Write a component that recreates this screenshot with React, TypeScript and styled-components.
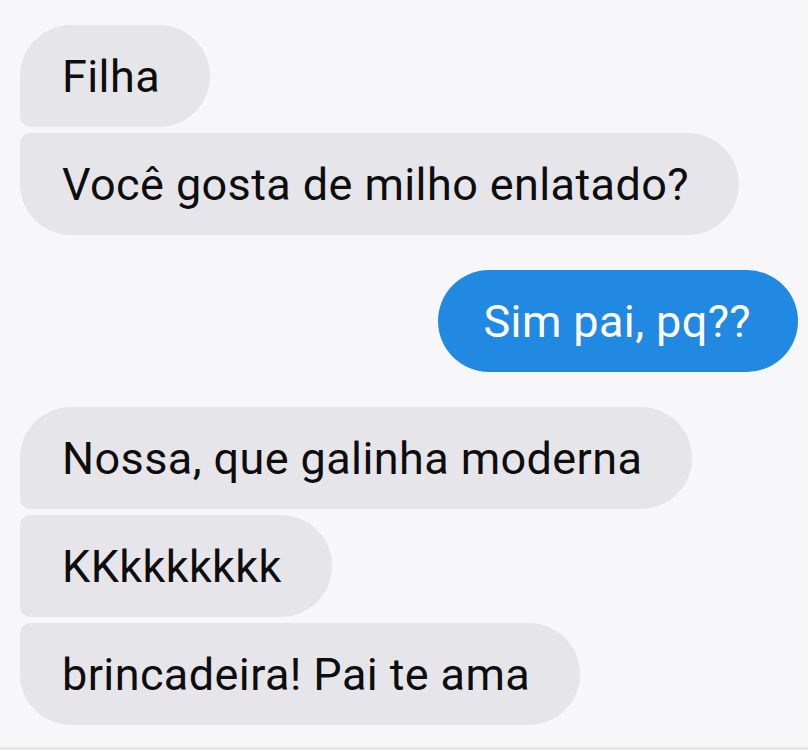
import * as React from "react";
import styled, { createGlobalStyle } from "styled-components";

const GlobalStyle = createGlobalStyle`
  html, body {
    margin: 0;
    padding: 0;
    background: #f7f6f9;
  }
  body {
    font-family: Roboto, "Noto Sans", "Liberation Sans", sans-serif;
  }
`;

const Screen = styled.div`
  width: 808px;
  height: 750px;
  box-sizing: border-box;
  padding: 25px 10px 0 20px;
  display: flex;
  flex-direction: column;
  gap: 35px;
  border-bottom: 3px solid #e9e8ec;
  background: #f7f6f9;
`;

const Group = styled.div<{ $mine?: boolean }>`
  display: flex;
  flex-direction: column;
  align-items: ${(p) => (p.$mine ? "flex-end" : "flex-start")};
  gap: 6px;
`;

type Pos = "single" | "first" | "middle" | "last";

const radius = (pos: Pos) => {
  const big = "51px";
  const small = "10px";
  switch (pos) {
    case "first":
      return `${big} ${big} ${big} ${small}`;
    case "middle":
      return `${small} ${big} ${big} ${small}`;
    case "last":
      return `${small} ${big} ${big} ${big}`;
    default:
      return big;
  }
};

const Bubble = styled.div<{ $pos: Pos; $mine?: boolean }>`
  height: 102px;
  box-sizing: border-box;
  padding: ${(p) => (p.$mine ? "0 47px 0 45px" : "0 50px 0 42px")};
  display: flex;
  align-items: center;
  font-size: 45px;
  letter-spacing: 0.4px;
  white-space: nowrap;
  border-radius: ${(p) => radius(p.$pos)};
  background: ${(p) => (p.$mine ? "#2289e2" : "#e6e5ea")};
  color: ${(p) => (p.$mine ? "#ffffff" : "#0d0d0d")};
`;

const groups: { mine?: boolean; lines: string[] }[] = [
  { lines: ["Filha", "Você gosta de milho enlatado?"] },
  { mine: true, lines: ["Sim pai, pq??"] },
  { lines: ["Nossa, que galinha moderna", "KKkkkkkkk", "brincadeira! Pai te ama"] },
];

const position = (i: number, n: number): Pos => {
  if (n === 1) return "single";
  if (i === 0) return "first";
  if (i === n - 1) return "last";
  return "middle";
};

export default function App() {
  return (
    <>
      <GlobalStyle />
      <Screen>
        {groups.map((g, gi) => (
          <Group key={gi} $mine={g.mine}>
            {g.lines.map((line, i) => (
              <Bubble key={i} $mine={g.mine} $pos={position(i, g.lines.length)}>
                {line}
              </Bubble>
            ))}
          </Group>
        ))}
      </Screen>
    </>
  );
}
